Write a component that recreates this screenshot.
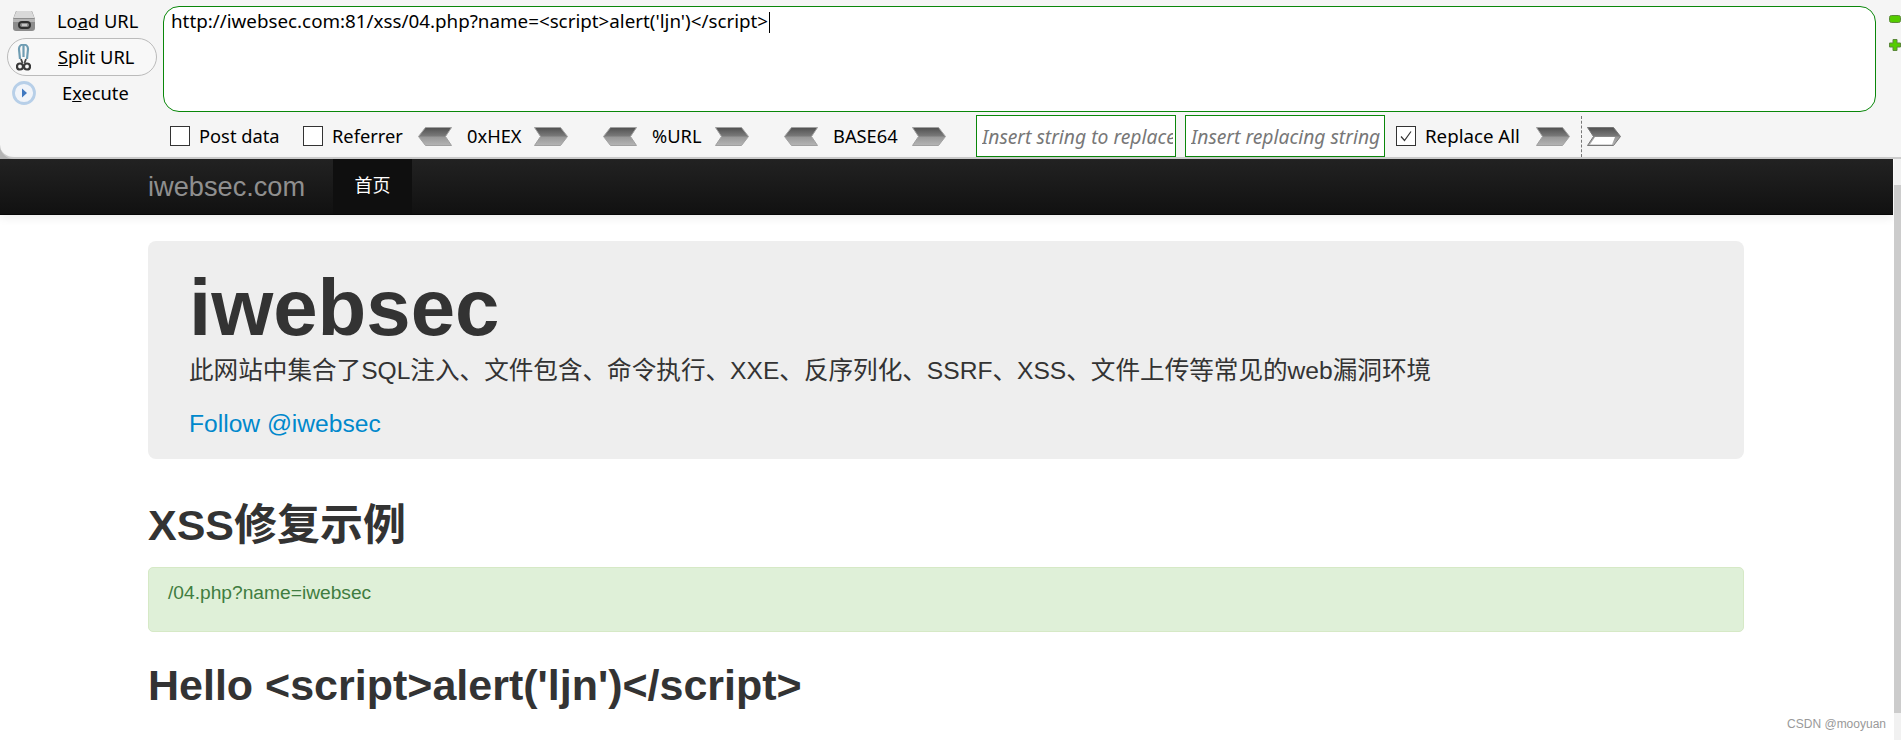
<div class="page">
  <div class="barw">
  <div class="bar">
    <div class="side">
      <div class="act"><svg class="ico i-load" viewBox="0 0 24 22" width="24" height="22"><path d="M4 1h16l3 8v9a3 3 0 0 1-3 3H4a3 3 0 0 1-3-3V9z" fill="#8c8c8c"/><path d="M4.500 1h15l3 7H1.500z" fill="#d9d9d9"/><path d="M1 9h22v3H1z" fill="#b5b5b5"/><rect x="7" y="12" width="11" height="6" rx="3" fill="none" stroke="#2f2f2f" stroke-width="2"/><path d="M10 15h5" stroke="#fff" stroke-width="1"/></svg><span class="l l1">Lo<u>a</u>d URL</span></div>
      <div class="act on"><svg class="ico i-split" viewBox="0 0 15 27" width="15" height="27"><path d="M4 15 L3 5a4.500 4.500 0 0 1 9 0L11 15M7.500 0v13" fill="none" stroke="#6f9db3" stroke-width="2.200"/><path d="M5 15l1.500 4M10 15l-1.500 4" stroke="#444" stroke-width="1.800"/><circle cx="4" cy="22.500" r="3" fill="none" stroke="#3a3a3a" stroke-width="2.200"/><circle cx="11" cy="22.500" r="3" fill="none" stroke="#3a3a3a" stroke-width="2.200"/></svg><span class="l l2"><u>S</u>plit URL</span></div>
      <div class="act"><svg class="ico" viewBox="0 0 24 24" width="24" height="24"><circle cx="12" cy="12" r="10.500" fill="#f1f4f9" stroke="#b7cfe8" stroke-width="2.800"/><path d="M10 7.500l5 4.500-5 4.500z" fill="#3f78c0"/></svg><span class="l l3">E<u>x</u>ecute</span></div>
    </div>
    <div class="main">
      <div class="urlbox">http://iwebsec.com:81/xss/04.php?name=&lt;script&gt;alert('ljn')&lt;/script&gt;<i class="caret"></i></div>
      <div class="tools">
        <span class="cb c1"></span><span class="t pd">Post data</span>
        <span class="cb"></span><span class="t rf">Referrer</span>
        <svg class="ch" viewBox="0 0 34 19" width="34" height="19"><path d="M7.500.5h26l-6 9 6 9h-26l-7-9z" fill="url(#gr)" stroke="#a0a0a0"/></svg>
        <span class="t hex">0xHEX</span>
        <svg class="ch" viewBox="0 0 34 19" width="34" height="19"><path d="M.5.5h26l7 9-7 9H.5l6-9z" fill="url(#gr)" stroke="#a0a0a0"/></svg>
        <svg class="ch g" viewBox="0 0 34 19" width="34" height="19"><path d="M7.500.5h26l-6 9 6 9h-26l-7-9z" fill="url(#gr)" stroke="#a0a0a0"/></svg>
        <span class="t url">%URL</span>
        <svg class="ch" viewBox="0 0 34 19" width="34" height="19"><path d="M.5.5h26l7 9-7 9H.5l6-9z" fill="url(#gr)" stroke="#a0a0a0"/></svg>
        <svg class="ch g" viewBox="0 0 34 19" width="34" height="19"><path d="M7.500.5h26l-6 9 6 9h-26l-7-9z" fill="url(#gr)" stroke="#a0a0a0"/></svg>
        <span class="t b64">BASE64</span>
        <svg class="ch" viewBox="0 0 34 19" width="34" height="19"><path d="M.5.5h26l7 9-7 9H.5l6-9z" fill="url(#gr)" stroke="#a0a0a0"/></svg>
        <span class="inp i1"><em>Insert string to replace</em></span>
        <span class="inp i2"><em>Insert replacing string</em></span>
        <span class="cb ck"><svg viewBox="0 0 14 14" width="14" height="14"><path d="M2 7.500l3.500 4L12 2.500" fill="none" stroke="#333" stroke-width="1.200"/></svg></span>
        <span class="t ra">Replace All</span>
        <svg class="ch" viewBox="0 0 34 19" width="34" height="19"><path d="M.5.5h26l7 9-7 9H.5l6-9z" fill="url(#gr)" stroke="#a0a0a0"/></svg>
        <span class="dash"></span>
        <svg class="ch last" viewBox="0 0 34 19" width="34" height="19"><path d="M.5.5h26l7 9-7 9H.5l6-9z" fill="url(#gr)" stroke="#777"/><path d="M8 10h20l-3 7.500H3z" fill="#fff"/></svg>
      </div>
    </div>
    <div class="zoom">
      <svg viewBox="0 0 12 12" width="12" height="12"><rect x="0.500" y="2.500" width="11" height="7" rx="2" fill="#55cc00" stroke="#5c8a3a"/></svg>
      <svg viewBox="0 0 12 12" width="12" height="12"><path d="M4 .5h4V4h3.500v4H8v3.500H4V8H.5V4H4z" fill="#55cc00" stroke="#5c8a3a"/></svg>
    </div>
  </div>
  </div>

  <svg class="defs" width="0" height="0"><defs><linearGradient id="gr" x1="0" y1="0" x2="0" y2="1"><stop offset="0" stop-color="#505050"/><stop offset="0.45" stop-color="#787878"/><stop offset="0.55" stop-color="#999"/><stop offset="1" stop-color="#b5b5b5"/></linearGradient></defs></svg>

  <nav class="nav">
    <div class="wrap navin">
      <span class="brand">iwebsec.com</span>
      <span class="home">首页</span>
    </div>
  </nav>

  <div class="track"><div class="thumb"></div></div>

  <div class="wrap content">
    <section class="jumbo">
      <h1>iwebsec</h1>
      <p class="lead">此网站中集合了SQL注入、文件包含、命令执行、XXE、反序列化、SSRF、XSS、文件上传等常见的web漏洞环境</p>
      <p class="follow">Follow @iwebsec</p>
    </section>
    <h2 class="h-a">XSS修复示例</h2>
    <div class="alert">/04.php?name=iwebsec</div>
    <h2 class="h-b">Hello &lt;script&gt;alert('ljn')&lt;/script&gt;</h2>
  </div>

  <span class="mark">CSDN @mooyuan</span>
</div>

<style>
  :global(body) { margin: 0; background: #fff; overflow: hidden; }
  .page { position: relative; width: 1901px; height: 740px; overflow: hidden; font-family: "Liberation Sans", "Noto Sans CJK SC", sans-serif; color: #333; }
  .defs { position: absolute; }
  .barw { background: #b4b4b4; height: 159px; }
  .bar { display: flex; height: 159px; box-sizing: border-box; background: #f5f5f5; border-bottom: 2px solid #ccc; border-bottom-left-radius: 14px; font-family: "Noto Sans", "Liberation Sans", sans-serif; color: #000; }
  .side { width: 163px; flex: none; display: flex; flex-direction: column; padding: 3px 0 0 7px; box-sizing: border-box; }
  .act { height: 36px; width: 150px; display: flex; align-items: center; box-sizing: border-box; border: 1px solid transparent; }
  .act.on { height: 38px; margin: -1px 0; border-color: #bbb; border-radius: 19px; background: #f8f8f8; }
  .ico { margin-left: 4px; flex: none; }
  .i-split { margin-left: 8px; }
  .l { font-size: 18.300px; white-space: nowrap; line-height: 24px; }
  .l1 { margin-left: 21px; } .l2 { margin-left: 27px; } .l3 { margin-left: 26px; }
  .main { width: 1713px; flex: none; display: flex; flex-direction: column; padding-top: 6px; }
  .urlbox { height: 107px; box-sizing: border-box; background: #fff; border: 1.500px solid #0a870a; border-radius: 16px; padding: 2px 7px; font-size: 18.800px; line-height: 24px; white-space: nowrap; }
  .caret { display: inline-block; width: 1px; height: 21px; background: #000; vertical-align: -5px; margin-left: 1px; }
  .tools { display: flex; align-items: center; height: 42px; margin-top: 3px; }
  .cb { width: 20px; height: 20px; box-sizing: border-box; border: 1px solid #333; background: #fff; flex: none; display: flex; align-items: center; justify-content: center; }
  .c1 { margin-left: 7px; }
  .t { font-size: 18.300px; white-space: nowrap; flex: none; line-height: 24px; }
  .pd { margin-left: 9px; width: 104px; }
  .rf { margin-left: 9px; width: 86px; }
  .ch { flex: none; display: block; }
  .g { margin-left: 35px; }
  .hex { margin-left: 15px; width: 67px; }
  .url { margin-left: 15px; width: 63px; }
  .b64 { margin-left: 15px; width: 79px; }
  .inp { box-sizing: border-box; height: 42px; width: 200px; border: 1px solid #0a870a; background: #fff; white-space: nowrap; display: flex; align-items: center; padding-left: 5px; color: #777; font-size: 19.300px; flex: none; }
  .inp em { font-style: italic; display: block; overflow: hidden; width: 191px; }
  .i1 { margin-left: 30px; }
  .i2 { margin-left: 9px; }
  .ck { margin-left: 11px; }
  .ra { margin-left: 9px; width: 111px; font-size: 18.700px; }
  .dash { width: 0; height: 41px; border-left: 1px dashed #777; margin-left: 11px; flex: none; }
  .last { margin-left: 5px; }
  .zoom { flex: 1; display: flex; flex-direction: column; padding: 13px 0 0 13px; gap: 14px; }
  .nav { height: 56px; box-sizing: border-box; background: linear-gradient(#222, #111); border-bottom: 1px solid #080808; box-shadow: 0 3px 9px rgba(0,0,0,.07); width: 1893px; position: relative; }
  .wrap { margin-left: 148px; width: 1596px; }
  .navin { display: flex; height: 100%; }
  .brand { font-size: 27.200px; color: #8f8f8f; line-height: 55px; width: 185px; flex: none; }
  .home { background: #0f0f0f; width: 79px; text-align: center; color: #fff; font-size: 18px; line-height: 55px; flex: none; }
  .track { position: absolute; left: 1894px; top: 159px; bottom: 0; width: 7px; background: #f1f1f1; }
  .thumb { margin-top: 26px; height: 528px; background: #ccc; }
  .content { padding-top: 26px; }
  .jumbo { height: 218px; box-sizing: border-box; background: #eee; border-radius: 8px; padding: 25px 41px 0; }
  h1 { margin: 0; font-size: 79.800px; line-height: 84px; font-weight: 700; }
  .lead { margin: 3px 0 0; font-size: 24.600px; line-height: 36px; font-weight: 400; }
  .follow { margin: 18px 0 0; font-size: 24.600px; line-height: 34px; color: #0088cc; }
  h2 { margin: 0; font-size: 43px; line-height: 44px; font-weight: 700; }
  .h-a { margin-top: 44px; }
  .alert { margin-top: 20px; height: 65px; box-sizing: border-box; background: #dff0d8; border: 1px solid #d6e9c6; border-radius: 5px; padding: 12px 19px; color: #3f7d40; font-size: 19.200px; line-height: 26px; }
  .h-b { margin-top: 31px; }
  .mark { position: absolute; right: 15px; bottom: 9px; font-size: 12px; color: #999; font-family: "Liberation Sans", sans-serif; }
</style>
